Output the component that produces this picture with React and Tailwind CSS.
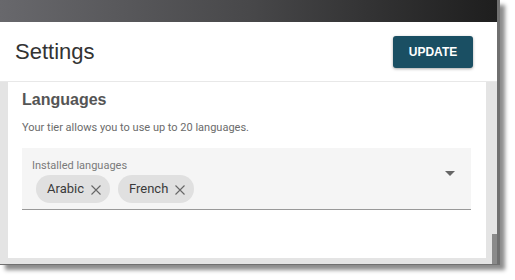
import React from "react";

const Chip = ({ label }) => (
  <div className="flex items-center h-[28px] rounded-full bg-[#e0e0e0] pl-[11px] pr-[9px] gap-[7px] text-[13px] text-[#3a3a3a]">
    <span>{label}</span>
    <svg width="10" height="10" viewBox="0 0 10 10" className="mt-[1px]">
      <path d="M0.5 0.5 L9.5 9.5 M9.5 0.5 L0.5 9.5" stroke="#666" strokeWidth="1.1" />
    </svg>
  </div>
);

const App = () => {
  return (
    <div className="w-[515px] h-[280px] bg-white overflow-hidden" style={{ fontFamily: "Roboto, 'Liberation Sans', sans-serif" }}>
      <div className="w-[500px] h-[265px] flex flex-col border-r-[3px] border-b border-[#707070] shadow-[5px_5px_4px_rgba(0,0,0,0.45)]">
        {/* Title bar */}
        <div className="h-[22px] bg-gradient-to-r from-[#68686c] via-[#48484a] to-[#1e1e1e]" />

        {/* Header */}
        <div className="h-[60px] flex items-center justify-between pl-[15px] pr-[24px] border-b border-[#e8e8e8] bg-white">
          <h1 className="text-[22px] text-[#333] font-['Liberation_Sans',sans-serif]">Settings</h1>
          <button className="w-[80px] h-[32px] rounded-[3px] bg-[#1a4f63] text-white text-[12px] font-bold font-['Liberation_Sans',sans-serif] shadow-[0_1px_3px_rgba(0,0,0,0.35)]">
            UPDATE
          </button>
        </div>

        {/* Body */}
        <div className="flex-1 flex bg-[#e4e4e4] pl-[8px] pb-[6px]">
          <div className="flex-1 bg-white px-[14px] pt-[8px]">
            <h2 className="text-[16px] font-bold text-[#555] font-['Liberation_Sans',sans-serif] leading-[20px]">Languages</h2>
            <p className="mt-[11px] text-[11px] text-[#6b6b6b] leading-[14px]">Your tier allows you to use up to 20 languages.</p>

            <div className="mt-[13px] mr-[1px] bg-[#f5f5f5] border-b border-[#999] h-[62px] pt-[11px] pl-[10px] pr-[16px] flex justify-between">
              <div>
                <div className="text-[11px] text-[#7a7a7a] leading-[13px]">Installed languages</div>
                <div className="flex gap-[8px] mt-[3px] ml-[4px]">
                  <Chip label="Arabic" />
                  <Chip label="French" />
                </div>
              </div>
              <svg width="10" height="5" viewBox="0 0 10 5" className="mt-[12px]">
                <path d="M0 0 L10 0 L5 5 Z" fill="#666" />
              </svg>
            </div>
          </div>
          <div className="w-[6px]" />
          <div className="w-[5px] flex flex-col justify-end -mb-[6px]">
            <div className="h-[30px] bg-[#8a8a8a]" />
          </div>
        </div>
      </div>
    </div>
  );
};

export default App;
